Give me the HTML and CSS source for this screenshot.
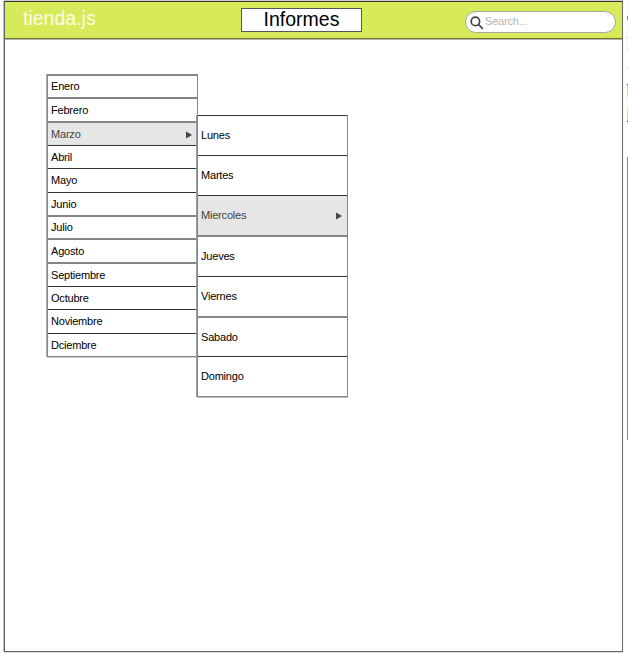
FILE: index.html
```
<!DOCTYPE html>
<html lang="es">
<head>
<meta charset="utf-8">
<title>tienda.js</title>
<link rel="stylesheet" href="styles.css">
</head>
<body>
<main class="window">
  <header class="bar">
    <div class="brand">tienda.js</div>
    <h1 class="title">Informes</h1>
    <div class="search">
      <svg class="lens" viewBox="0 0 14 14"><circle cx="5.4" cy="5.4" r="4.2"/><path d="M8.5 8.5L12.8 12.8"/></svg>
      <span>Search...</span>
    </div>
  </header>
  <div class="menus">
    <ul class="menu months">
      <li class="soft">Enero</li>
      <li class="soft">Febrero</li>
      <li class="soft active">Marzo<svg class="arrow" viewBox="0 0 6 8"><path d="M0 .5L6 4L0 7.5Z"/></svg></li>
      <li>Abril</li>
      <li>Mayo</li>
      <li>Junio</li>
      <li class="soft">Julio</li>
      <li class="soft">Agosto</li>
      <li class="soft">Septiembre</li>
      <li>Octubre</li>
      <li>Noviembre</li>
      <li>Dciembre</li>
    </ul>
    <ul class="menu days">
      <li>Lunes</li>
      <li>Martes</li>
      <li class="active">Miercoles<svg class="arrow" viewBox="0 0 6 8"><path d="M0 .5L6 4L0 7.5Z"/></svg></li>
      <li class="soft">Jueves</li>
      <li>Viernes</li>
      <li class="soft">Sabado</li>
      <li>Domingo</li>
    </ul>
  </div>
</main>
<aside class="next">
  <div class="next-top"><i></i><i></i><i></i><i></i></div>
  <div class="next-green"></div>
  <div class="next-panel"></div>
</aside>
</body>
</html>
```
FILE: styles.css
```
* { box-sizing: border-box; }
body {
  margin: 0;
  height: 654px;
  display: flex;
  overflow: hidden;
  background: #fff;
  font-family: "Liberation Sans", Arial, sans-serif;
}
.window {
  width: 619px;
  height: 651px;
  margin: 1px 0 0 4px;
  border: 1px solid #666;
  border-top-color: #333;
  box-shadow: -1px 0 #bbb, 0 -1px #ccc, 0 1px #ddd;
  flex: none;
}
.bar {
  height: 37px;
  display: flex;
  align-items: flex-start;
  background: #d7eb5a;
  border-bottom: 1px solid #6b752d;
  box-shadow: 0 1px #b4b4b4;
}
.brand {
  width: 218px;
  margin-left: 18px;
  padding-top: 6px;
  font-size: 19.5px;
  line-height: 20px;
  color: #fbfbe5;
}
.title {
  width: 121px;
  height: 24px;
  margin: 6px 0 0;
  border: 1px solid #555;
  background: #fff;
  font-size: 19.5px;
  line-height: 21px;
  font-weight: 400;
  text-align: center;
  color: #000;
}
.search {
  display: flex;
  align-items: center;
  width: 151px;
  height: 22px;
  margin: 9px 0 0 103px;
  padding-left: 4px;
  border: 1px solid #a5a5a5;
  border-radius: 11px;
  background: #fff;
  font-size: 11px;
  letter-spacing: -.2px;
  color: #b5b5b5;
}
.search span { line-height: 18px; padding-bottom: 2px; }
.lens { width: 14px; height: 14px; margin: 1px 1px 0 0; fill: none; stroke: #444; stroke-width: 1.7; }
.menus { display: flex; align-items: flex-start; padding: 35px 0 0 42px; }
.menu {
  display: grid;
  margin: 0;
  padding: 0;
  list-style: none;
  font-size: 11px;
  letter-spacing: -.2px;
  color: #000;
  border: solid #888;
  border-width: 0 1px 1px;
}
.menu li {
  display: flex;
  align-items: center;
  justify-content: space-between;
  padding: 0 5px 1px 3px;
  border-top: 1px solid #333;
}
.menu li.soft { border-top: 2px solid #858585; }
.menu li.active { background: #e6e6e6; color: #444; }
.arrow { width: 6px; height: 8px; margin-top: 2px; fill: #444; }
.months {
  width: 151px;
  grid-template-rows: 23px 24px 24px 23px 24px 23px 23px 24px 24px 23px 24px 23px;
  box-shadow: -1px 0 #aaa, 0 1px #ccc;
}
.months li { line-height: 20px; }
.days {
  width: 151px;
  margin: 41px 0 0 -1px;
  grid-template-rows: 40px 40px 40px 41px 40px 40px 40px;
  box-shadow: -1px 0 #999, 0 1px #bbb;
}
.next { width: 1px; margin-left: 4px; flex: none; }
.next-top {
  height: 84px;
  padding-top: 16px;
  background: linear-gradient(#f3f3f3 48px, #fff 48px);
}
.next-top i { display: block; height: 1px; background: #bbb; margin-bottom: 18px; }
.next-top i:first-child { height: 4px; background: #888; margin-bottom: 17px; }
.next-top i:nth-child(2) { margin-bottom: 11px; }
.next-green {
  height: 38px;
  border: solid #444;
  border-width: 1px 0;
  background: linear-gradient(#d7eb5a 12px, #fbfbe5 12px, #fbfbe5 24px, #d7eb5a 24px);
}
.next-panel { height: 283px; margin-top: 35px; background: #888; }
```
